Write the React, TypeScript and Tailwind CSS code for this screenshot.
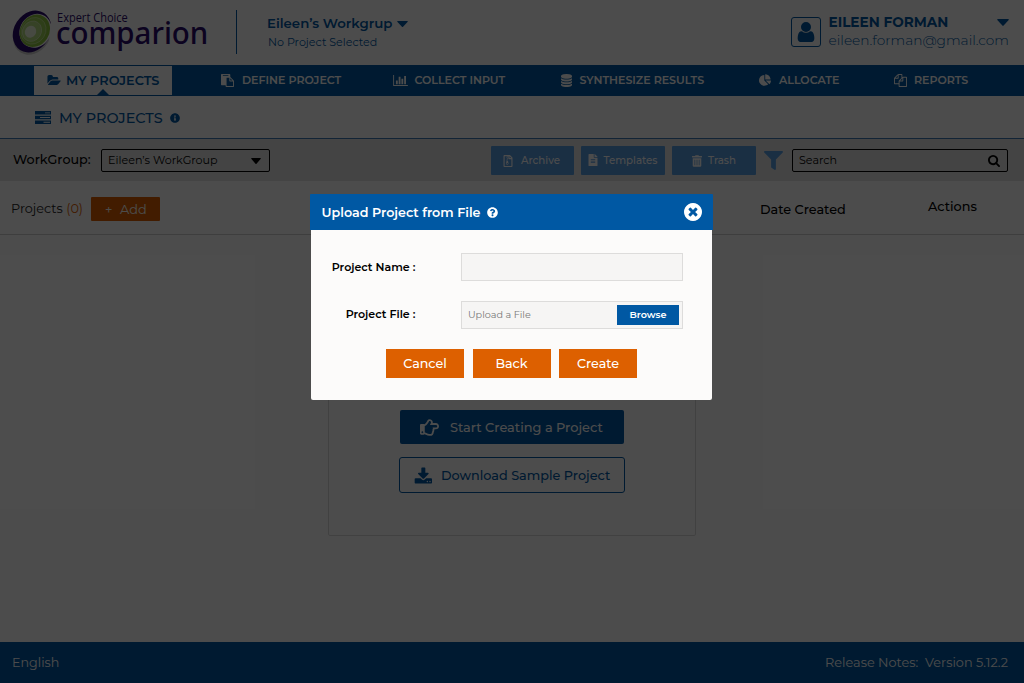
import React from 'react';
import {
  FaFileAlt,
  FaFilter,
  FaInfoCircle,
  FaQuestionCircle,
  FaRegFileArchive,
  FaRegHandPointRight,
  FaTrashAlt,
} from 'react-icons/fa';

const paths = {
  folder:
    'M1943 952q0 31-31 66l-336 396q-43 51-120.500 86.500t-143.500 35.500h-1088q-34 0-60.500-13t-26.500-43q0-31 31-66l336-396q43-51 120.500-86.500t143.500-35.500h1088q34 0 60.500 13t26.500 43zm-343-344v160h-832q-94 0-197 47.500t-164 119.500l-337 396-5 6q0-4-.5-12.500t-.5-12.500v-960q0-92 66-158t158-66h320q92 0 158 66t66 158v32h544q92 0 158 66t66 158z',
  paste:
    'M768 1664h896v-640h-416q-40 0-68-28t-28-68v-416h-384v1152zm256-1440v-64q0-13-9.500-22.500t-22.500-9.500h-704q-13 0-22.500 9.500t-9.500 22.500v64q0 13 9.500 22.500t22.500 9.500h704q13 0 22.500-9.500t9.500-22.500zm256 672h299l-299-299v299zm512 128v672q0 40-28 68t-68 28h-960q-40 0-68-28t-28-68v-160h-544q-40 0-68-28t-28-68v-1344q0-40 28-68t68-28h1088q40 0 68 28t28 68v328q21 13 36 28l408 408q28 28 48 76t20 88z',
  bars:
    'M640 896v512h-256v-512h256zm384-512v1024h-256v-1024h256zm1024 1152v128h-2048v-1536h128v1408h1920zm-640-896v768h-256v-768h256zm384-384v1152h-256v-1152h256z',
  database:
    'M896 768q237 0 443-43t325-127v170q0 69-103 128t-280 93.500-385 34.500-385-34.500-280-93.500-103-128v-170q119 84 325 127t443 43zm0 768q237 0 443-43t325-127v170q0 69-103 128t-280 93.500-385 34.500-385-34.500-280-93.500-103-128v-170q119 84 325 127t443 43zm0-384q237 0 443-43t325-127v170q0 69-103 128t-280 93.500-385 34.500-385-34.500-280-93.500-103-128v-170q119 84 325 127t443 43zm0-1152q208 0 385 34.500t280 93.500 103 128v128q0 69-103 128t-280 93.500-385 34.500-385-34.500-280-93.500-103-128v-128q0-69 103-128t280-93.500 385-34.500z',
  pie:
    'M768 890l546 546q-106 108-247.500 168t-298.500 60q-209 0-385.500-103t-279.500-279.500-103-385.500 103-385.500 279.500-279.500 385.500-103v762zm187 6h773q0 157-60 298.500t-168 247.500zm709-128h-768v-768q209 0 385.500 103t279.500 279.500 103 385.500z',
  files:
    'M1696 384q40 0 68 28t28 68v1216q0 40-28 68t-68 28h-960q-40 0-68-28t-28-68v-288h-544q-40 0-68-28t-28-68v-672q0-40 20-88t48-76l408-408q28-28 76-48t88-20h416q40 0 68 28t28 68v328q68-40 128-40h416zm-544 213l-299 299h299v-299zm-640-384l-299 299h299v-299zm196 647l316-316v-416h-384v416q0 40-28 68t-68 28h-416v640h512v-256q0-40 20-88t48-76zm956 804v-1152h-384v416q0 40-28 68t-68 28h-416v640h896z',
  user:
    'M1536 1399q0 109-62.500 187t-150.500 78h-854q-88 0-150.500-78t-62.500-187q0-85 8.500-160.500t31.500-152 58.500-131 94-89 134.500-34.500q131 128 313 128t313-128q76 0 134.500 34.500t94 89 58.500 131 31.500 152 8.500 160.500zm-256-887q0 159-112.500 271.500t-271.500 112.500-271.500-112.500-112.500-271.500 112.500-271.500 271.500-112.500 271.500 112.500 112.500 271.500z',
  download:
    'M1344 1344q0-26-19-45t-45-19-45 19-19 45 19 45 45 19 45-19 19-45zm256 0q0-26-19-45t-45-19-45 19-19 45 19 45 45 19 45-19 19-45zm128-224v320q0 40-28 68t-68 28h-1472q-40 0-68-28t-28-68v-320q0-40 28-68t68-28h465l135 136q58 56 136 56t136-56l136-136h464q40 0 68 28t28 68zm-325-569q17 41-14 70l-448 448q-18 19-45 19t-45-19l-448-448q-31-29-14-70 17-39 59-39h256v-448q0-26 19-45t45-19h256q26 0 45 19t19 45v448h256q42 0 59 39z',
  close:
    'M1277 1122q0-26-19-45l-181-181 181-181q19-19 19-45 0-27-19-46l-90-90q-19-19-46-19-26 0-45 19l-181 181-181-181q-19-19-45-19-27 0-46 19l-90 90q-19 19-19 46 0 26 19 45l181 181-181 181q-19 19-19 45 0 27 19 46l90 90q19 19 46 19 26 0 45-19l181-181 181 181q19 19 45 19 27 0 46-19l90-90q19-19 19-46zm387-226q0 209-103 385.500t-279.500 279.500-385.500 103-385.500-103-279.500-279.500-103-385.500 103-385.500 279.500-279.500 385.500-103 385.500 103 279.500 279.500 103 385.500z',
  search:
    'M1216 832q0-185-131.500-316.500t-316.500-131.500-316.500 131.500-131.500 316.500 131.500 316.500 316.500 131.500 316.500-131.500 131.500-316.500zm512 832q0 52-38 90t-90 38q-54 0-90-38l-343-342q-179 124-399 124-143 0-273.500-55.500t-225-150-150-225-55.500-273.500 55.500-273.500 150-225 225-150 273.500-55.500 273.500 55.500 225 150 150 225 55.500 273.500q0 220-124 399l343 343q37 37 37 90z',
};

function Glyph({ name, box, className }: { name: keyof typeof paths; box: string; className: string }) {
  return (
    <svg viewBox={box} className={`shrink-0 ${className}`} fill="currentColor" aria-hidden="true">
      <path d={paths[name]} />
    </svg>
  );
}

function Triangle({ className }: { className: string }) {
  return (
    <svg viewBox="0 0 12 7" className={`shrink-0 ${className}`} fill="currentColor" preserveAspectRatio="none" aria-hidden="true">
      <path d="M.8 0h10.400q.8.100.5.900L6.600 6.600q-.6.600-1.200 0L.3.900Q0 .1.800 0z" />
    </svg>
  );
}

function Logo() {
  return (
    <div className="flex w-[224px] pl-[11px] pt-[8px]">
      <svg viewBox="0 0 45 49" className="h-[49px] w-[45px] shrink-0" aria-hidden="true">
        <ellipse cx="21.500" cy="25.500" rx="18" ry="22.500" transform="rotate(33 21.500 25.500)" fill="#b0b0b0" opacity=".6" />
        <ellipse cx="21" cy="23.500" rx="18" ry="22" transform="rotate(33 21 23.500)" fill="#2b0a6b" />
        <ellipse cx="24.500" cy="22.800" rx="15.500" ry="17.500" transform="rotate(33 24.500 22.800)" fill="#fff" />
        <path d="M39 16l6-3v26l-7-3z" fill="#fff" />
        <ellipse cx="23.800" cy="22.800" rx="14.500" ry="16.800" transform="rotate(33 23.800 22.800)" fill="#8cc63f" />
        <ellipse cx="22.500" cy="22.800" rx="12" ry="13.800" transform="rotate(33 22.500 22.800)" fill="#9ccf55" stroke="#bfe08f" strokeWidth=".8" />
        <ellipse cx="21" cy="23.200" rx="9.200" ry="10.500" transform="rotate(33 21 23.200)" fill="#b5dc80" stroke="#d3ebb2" strokeWidth=".8" />
        <ellipse cx="19.500" cy="23.800" rx="5.500" ry="6.200" transform="rotate(33 19.500 23.800)" fill="#eef8de" />
      </svg>
      <div className="whitespace-nowrap text-[#2b0a6b]">
        <div className="ml-[1px] mt-[3px] h-[13px] w-[76px] origin-left scale-x-[0.920] font-['Open_Sans',sans-serif] text-[12px] leading-[13px]">Expert Choice</div>
        <div className="h-[28px] w-[170px] origin-left scale-x-[0.950] font-['Noto_Sans',sans-serif] text-[31px] font-medium leading-[17px]">comparion</div>
      </div>
    </div>
  );
}

function Header() {
  return (
    <header className="flex h-[65px] bg-white text-[#0058a3]">
      <Logo />
      <div className="ml-[12px] mt-[10px] h-[44px] w-px bg-[#0058a3]" />
      <div className="ml-[30px] w-[200px] whitespace-nowrap pt-[15px]">
        <div className="flex items-center">
          <span className="text-[13.300px] font-semibold leading-[16px]">Eileen’s Workgrup</span>
          <Triangle className="ml-[5px] mt-px h-[6px] w-[11px]" />
        </div>
        <div className="ml-[1px] mt-[4px] text-[11.100px] leading-[14px]">No Project Selected</div>
      </div>
      <div className="ml-auto flex w-[233px] pt-[17px]">
        <div className="flex h-[30px] w-[30px] items-center justify-center rounded-[3px] border border-[#0058a3]">
          <Glyph name="user" box="128 0 1536 1792" className="h-[24px] w-[20px]" />
        </div>
        <div className="ml-[7.500px] w-[168.500px] whitespace-nowrap">
          <div className="-mt-[3px] text-[13.650px] font-bold leading-[17px]">EILEEN FORMAN</div>
          <div className="mt-px text-[13.750px] font-light leading-[17px]">eileen.forman@gmail.com</div>
        </div>
        <Triangle className="mt-[2px] h-[7px] w-[12px]" />
      </div>
    </header>
  );
}

function NavItem({ icon, label, className }: { icon: React.ReactNode; label: string; className: string }) {
  return (
    <a className={`flex shrink-0 items-center whitespace-nowrap text-[11.050px] font-semibold leading-[14px] ${className}`}>
      {icon}
      <span>{label}</span>
    </a>
  );
}

function Nav() {
  return (
    <nav className="flex h-[31px] bg-[#0058a3] pl-[34px] pt-px text-white">
      <div className="relative flex h-[29px] w-[138px] items-center whitespace-nowrap bg-white pl-[13px] text-[12.850px] font-semibold text-[#0058a3]">
        <Glyph name="folder" box="0 128 1984 1536" className="mr-[5px] h-[11px] w-[14px]" />
        <span>MY PROJECTS</span>
        <svg viewBox="0 0 12 6" className="absolute bottom-0 left-[63px] h-[6px] w-[12px]" fill="#0058a3" aria-hidden="true">
          <path d="M0 6L6 0l6 6z" />
        </svg>
      </div>
      <NavItem className="ml-[49px] w-[172px] pb-[3px]" label="DEFINE PROJECT" icon={<Glyph name="paste" box="0 0 1792 1792" className="mr-[8px] mt-[2px] h-[13px] w-[13px]" />} />
      <NavItem className="w-[168px] pb-[2px]" label="COLLECT INPUT" icon={<Glyph name="bars" box="0 128 2048 1536" className="mr-[6.500px] h-[11px] w-[15px]" />} />
      <NavItem className="w-[198px] pb-[2px]" label="SYNTHESIZE RESULTS" icon={<Glyph name="database" box="128 0 1536 1792" className="mr-[7.500px] h-[13px] w-[11px]" />} />
      <NavItem className="w-[135px] pb-[2px]" label="ALLOCATE" icon={<Glyph name="pie" box="0 0 1728 1664" className="mr-[8px] h-[12px] w-[12px]" />} />
      <NavItem className="w-[90px] pb-[2px]" label="REPORTS" icon={<Glyph name="files" box="0 0 1792 1792" className="mr-[7px] h-[13px] w-[13px]" />} />
    </nav>
  );
}

function Title() {
  return (
    <div className="flex h-[43px] items-center border-b border-[#3d78b5] bg-white pl-[35px] pt-px text-[#0058a3]">
      <svg viewBox="0 0 16 13" className="h-[13px] w-[16px]" fill="currentColor" aria-hidden="true">
        <path d="M0 0h16v3.500H0zM0 4.700h16v3.500H0zM0 9.400h16v3.500H0z" />
        <path d="M10 1.400h5v.9h-5zM5 6.100h10v.9H5zM8.500 10.800H15v.9H8.500z" fill="#fff" />
      </svg>
      <span className="ml-[8px] w-[111px] whitespace-nowrap text-[14.400px] font-medium leading-[18px]">MY PROJECTS</span>
      <FaInfoCircle className="h-[10px] w-[10px]" />
    </div>
  );
}

function Toolbar() {
  return (
    <div className="flex h-[42px] bg-[#e4e4e4]">
      <div className="w-[101px] whitespace-nowrap pl-[13px] pt-[13px] text-[12.700px] font-medium leading-[16px]">WorkGroup:</div>
      <div className="mt-[10px] flex h-[23px] w-[169px] items-center justify-between whitespace-nowrap rounded-[2px] border border-black pl-[6px] pr-[8px] text-[11.150px]">
        <span>Eileen’s WorkGroup</span>
        <Triangle className="h-[6px] w-[10px]" />
      </div>
      <div className="ml-[221px] mt-[7px] flex gap-[7px] whitespace-nowrap text-[10.250px] font-medium text-white">
        <button className="flex h-[29px] w-[83px] items-center rounded-[1px] bg-[#579de2] pl-[12px] pt-px">
          <FaRegFileArchive className="mb-px mr-[8px] h-[12px] w-[10px]" />
          Archive
        </button>
        <button className="flex h-[29px] w-[84px] items-center rounded-[1px] bg-[#579de2] pl-[7px]">
          <FaFileAlt className="mb-px mr-[5.500px] h-[12px] w-[10px]" />
          Templates
        </button>
        <button className="flex h-[29px] w-[84px] items-center rounded-[1px] bg-[#579de2] pl-[20px] pt-px">
          <FaTrashAlt className="mb-px mr-[6px] h-[12px] w-[10px]" />
          Trash
        </button>
      </div>
      <FaFilter className="ml-[8px] mt-[12px] h-[19px] w-[19px] text-[#579de2]" />
      <div className="ml-[9px] mt-[10px] flex h-[23px] w-[216px] items-center justify-between rounded-[2px] border border-black pl-[6px] pr-[7px] text-[11.150px]">
        <span>Search</span>
        <Glyph name="search" box="64 128 1664 1664" className="h-[12px] w-[12px]" />
      </div>
    </div>
  );
}

function TableHead() {
  return (
    <div className="flex h-[54px] whitespace-nowrap border-b border-[#cfcfcf] bg-white">
      <div className="w-[91px] pl-[11px] pt-[20px] text-[12.800px] leading-[16px] text-[#222]">
        Projects <span className="text-[#dd6000]">(0)</span>
      </div>
      <button className="mt-[16px] flex h-[24px] w-[69px] items-center rounded-[1px] bg-[#dd6000] pl-[14px] pt-px text-left text-[12.900px] text-white">
        <span className="w-[15px]">+</span>
        Add
      </button>
      <div className="ml-[600px] w-[168px] pt-[21px] text-[12.800px] font-medium leading-[16px]">Date Created</div>
      <div className="pt-[18px] text-[12.800px] font-medium leading-[16px]">Actions</div>
    </div>
  );
}

function EmptyState() {
  return (
    <main className="flex min-h-0 flex-1 flex-col items-center bg-white">
      <div className="mt-[24px] flex h-[277px] w-[368px] flex-col items-center rounded-[2px] border border-[#dadada] pt-[150px]">
        <button className="flex h-[34px] w-[224px] items-center whitespace-nowrap rounded-[2px] bg-[#0058a3] pl-[20px] text-[12.900px] font-medium text-white">
          <FaRegHandPointRight className="mr-[11px] h-[19px] w-[19px]" />
          <span className="pt-px">Start Creating a Project</span>
        </button>
        <button className="mt-[13px] flex h-[36px] w-[226px] items-center whitespace-nowrap rounded-[3px] border border-[#0058a3] pl-[14px] text-[12.800px] font-medium text-[#0058a3]">
          <Glyph name="download" box="0 0 1728 1536" className="mr-[9px] h-[17px] w-[18px]" />
          <span className="pt-px">Download Sample Project</span>
        </button>
      </div>
    </main>
  );
}

function Footer() {
  return (
    <footer className="flex h-[41px] items-center justify-between whitespace-pre bg-[#0058a3] pl-[12px] pr-[16px] text-[12.700px] text-white">
      <span>English</span>
      <span className="pt-px text-[12.850px]">Release Notes:  Version 5.12.2</span>
    </footer>
  );
}

function UploadDialog() {
  return (
    <section role="dialog" aria-label="Upload Project from File" className="ml-[310px] mt-[194px] h-[206px] w-[403px]">
      <div className="flex h-[36px] w-[403px] items-center whitespace-nowrap rounded-t-[1px] bg-[#0058a3] pl-[11.500px] pr-[11px] text-white">
        <h2 className="w-[165px] pt-px text-[12.700px] font-semibold">Upload Project from File</h2>
        <FaQuestionCircle className="h-[11px] w-[11px]" />
        <Glyph name="close" box="128 128 1536 1536" className="ml-auto h-[18px] w-[18px]" />
      </div>
      <div className="ml-px h-[170px] w-[401px] rounded-b-[2px] bg-[#fcfbfa] pt-[23px] text-[11px]">
        <div className="flex h-[28px] items-center">
          <label className="w-[104.500px] whitespace-nowrap pt-px text-right text-[11.050px] font-semibold">Project Name :</label>
          <div className="ml-[45.500px] h-[28px] w-[222px] border border-[#dddcdb] bg-[#f6f5f4]" />
        </div>
        <div className="mt-[20px] flex h-[28px] items-center">
          <label className="w-[104.500px] whitespace-nowrap pb-px text-right text-[11.050px] font-semibold">Project File :</label>
          <div className="ml-[45.500px] flex h-[28px] w-[222px] items-center justify-between whitespace-nowrap border border-[#dddcdb] bg-[#f6f5f4] pl-[6px] pr-[3px]">
            <span className="text-[9.650px] text-[#777]">Upload a File</span>
            <button className="h-[20px] w-[62px] bg-[#0058a3] text-[9.600px] font-semibold text-white">Browse</button>
          </div>
        </div>
        <div className="ml-[75px] mt-[20px] flex gap-[8.500px] text-[12.700px] font-medium text-white">
          <button className="h-[28.500px] w-[78px] bg-[#dd6000] pt-px">Cancel</button>
          <button className="h-[28.500px] w-[78px] bg-[#dd6000] pt-px">Back</button>
          <button className="h-[28.500px] w-[78px] bg-[#dd6000] pt-px">Create</button>
        </div>
      </div>
    </section>
  );
}

export default function App() {
  return (
    <div className="relative h-[683px] w-[1024px] overflow-hidden font-['Montserrat','Inter',sans-serif] text-black">
      <div className="flex h-full flex-col">
        <Header />
        <Nav />
        <Title />
        <Toolbar />
        <TableHead />
        <EmptyState />
        <Footer />
      </div>
      <div className="absolute inset-0 bg-black/70">
        <UploadDialog />
      </div>
    </div>
  );
}
